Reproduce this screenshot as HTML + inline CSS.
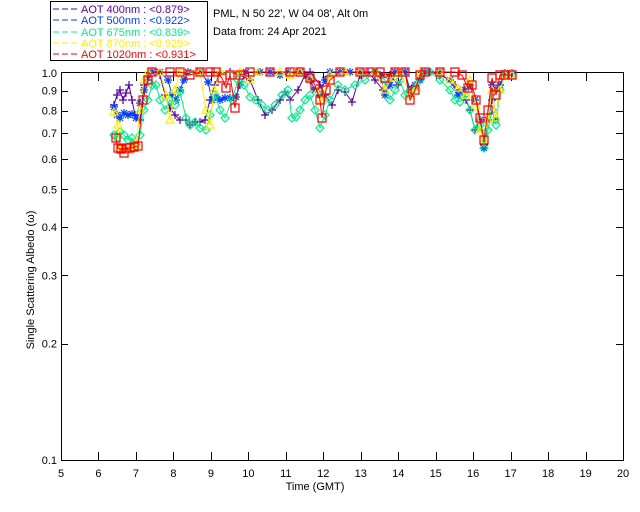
<!DOCTYPE html>
<html><head><meta charset="utf-8"><style>
html,body{margin:0;padding:0;background:#fff;width:640px;height:512px;overflow:hidden}
svg{display:block}
text{font-family:"Liberation Sans",sans-serif;font-size:11px}
</style></head><body>
<svg id="s" width="640" height="512" xmlns="http://www.w3.org/2000/svg">
<rect x="50.5" y="1.5" width="157" height="59" fill="none" stroke="#000"/>
<g font-size="11" xml:space="preserve">
<line x1="53" y1="9" x2="78" y2="9" stroke="#5a00a0" stroke-dasharray="6,3"/><text x="81" y="13" fill="#5a00a0">AOT  400nm : &lt;0.879&gt;</text>
<line x1="53" y1="20" x2="78" y2="20" stroke="#0040ff" stroke-dasharray="6,3"/><text x="81" y="24" fill="#0040ff">AOT  500nm : &lt;0.922&gt;</text>
<line x1="53" y1="32" x2="78" y2="32" stroke="#00ee88" stroke-dasharray="6,3"/><text x="81" y="36" fill="#00ee88">AOT  675nm : &lt;0.839&gt;</text>
<line x1="53" y1="43" x2="78" y2="43" stroke="#ffee00" stroke-dasharray="6,3"/><text x="81" y="47" fill="#ffee00">AOT  870nm : &lt;0.929&gt;</text>
<line x1="53" y1="54" x2="78" y2="54" stroke="#ff0000" stroke-dasharray="6,3"/><text x="81" y="58" fill="#ff0000">AOT 1020nm : &lt;0.931&gt;</text>
</g>
<text x="213" y="17">PML, N 50 22', W 04 08', Alt 0m</text>
<text x="213" y="35">Data from: 24 Apr 2021</text>
<rect x="61.5" y="72.5" width="562" height="388" fill="none" stroke="#000"/>
<g id="ax"></g>
<g id="data"></g>
<text x="315" y="490" text-anchor="middle">Time (GMT)</text>
<text transform="translate(34,280) rotate(-90)" text-anchor="middle">Single Scattering Albedo (ω)</text>
</svg>
<script>
var NS="http://www.w3.org/2000/svg",ax=document.getElementById('ax'),dg=document.getElementById('data');
function el(t,a,p){var e=document.createElementNS(NS,t);for(var k in a)e.setAttribute(k,a[k]);(p||ax).appendChild(e);return e;}
function X(t){return 61+(t-5)*37.47}
function Y(v){return 73-387*Math.log10(v)}
for(var h=5;h<=20;h++){var x=Math.round(X(h))+.5;
 if(h>5&&h<20){el('line',{x1:x,y1:460,x2:x,y2:452,stroke:'#000'});el('line',{x1:x,y1:73,x2:x,y2:81,stroke:'#000'});}
 var t=el('text',{x:X(h),y:477,'text-anchor':'middle'});t.textContent=h;}
var yl=[[1.0,'1.0'],[0.9,'0.9'],[0.8,'0.8'],[0.7,'0.7'],[0.6,'0.6'],[0.5,'0.5'],[0.4,'0.4'],[0.3,'0.3'],[0.2,'0.2'],[0.1,'0.1']];
yl.forEach(function(a){var y=Y(a[0]);var t=el('text',{x:57,y:y+4,'text-anchor':'end'});t.textContent=a[1];
 if(a[0]<1&&a[0]>0.1){el('line',{x1:61,y1:Math.round(y)+.5,x2:68,y2:Math.round(y)+.5,stroke:'#000'});el('line',{x1:616,y1:Math.round(y)+.5,x2:623,y2:Math.round(y)+.5,stroke:'#000'});}});
var S={
p:[[114,105],[117,95],[120,90],[123,100],[126,93],[129,85],[132,100],[135,115],[140,120],[144,85],[148,80],[152,72],[156,72],[160,75],[165,95],[170,108],[175,115],[180,120],[186,120],[190,125],[195,122],[200,122],[205,120],[210,100],[215,85],[220,72],[230,72],[240,75],[250,80],[258,100],[265,115],[272,110],[280,100],[285,92],[290,100],[298,90],[305,75],[310,72],[320,85],[325,95],[332,105],[338,90],[345,92],[352,102],[360,75],[368,72],[375,80],[383,90],[390,75],[398,85],[405,72],[410,92],[415,88],[420,75],[430,72],[440,75],[450,80],[455,85],[460,90],[466,100],[470,110],[475,130],[480,120],[484,145],[488,120],[492,100],[496,90],[500,85],[505,75],[512,73]],
b:[[114,107],[117,115],[120,118],[124,113],[128,115],[132,114],[136,118],[140,103],[144,90],[148,75],[152,72],[160,72],[168,80],[172,95],[176,100],[180,90],[184,80],[188,72],[200,72],[208,82],[212,100],[216,97],[220,100],[225,98],[230,98],[236,97],[240,85],[246,72],[260,72],[270,72],[280,75],[288,72],[300,72],[310,80],[315,90],[320,95],[325,80],[330,72],[340,72],[350,72],[360,72],[375,72],[380,75],[385,95],[390,85],[395,72],[405,72],[410,90],[415,85],[420,80],[425,72],[440,72],[450,80],[458,95],[465,90],[470,85],[475,100],[480,120],[484,148],[488,120],[492,85],[496,120],[500,85],[505,73],[512,73]],
g:[[114,135],[117,138],[120,132],[124,135],[128,140],[132,138],[136,145],[140,135],[144,110],[148,100],[152,85],[156,85],[160,100],[165,110],[170,100],[175,105],[180,92],[186,118],[190,125],[195,122],[200,128],[206,130],[210,115],[215,95],[220,110],[225,118],[232,100],[238,80],[244,85],[250,97],[256,100],[262,105],[268,110],[275,105],[282,95],[288,90],[292,118],[296,117],[300,110],[305,100],[310,95],[315,110],[320,128],[325,115],[330,100],[338,85],[345,90],[355,85],[365,80],[375,72],[385,80],[390,100],[395,90],[400,80],[405,95],[410,92],[415,88],[420,80],[430,72],[440,80],[450,90],[455,100],[460,102],[465,95],[470,110],[475,130],[480,125],[484,148],[488,130],[492,110],[496,125],[500,90],[505,75],[512,75]],
y:[[114,112],[118,125],[120,148],[124,150],[128,150],[132,148],[136,145],[140,110],[144,80],[148,72],[160,72],[166,95],[170,120],[175,90],[180,72],[200,72],[206,110],[210,125],[214,90],[220,72],[240,72],[250,80],[258,72],[280,72],[290,75],[300,72],[310,78],[318,90],[322,100],[330,75],[345,72],[360,72],[375,72],[385,90],[392,78],[400,72],[410,95],[416,88],[420,72],[440,72],[450,80],[458,88],[466,95],[470,80],[476,105],[480,130],[484,140],[488,120],[492,90],[496,118],[500,90],[505,75],[512,75]],
r:[[116,138],[118,148],[121,149],[124,153],[127,148],[130,148],[134,147],[138,146],[143,100],[148,80],[152,72],[170,72],[180,72],[190,75],[200,72],[210,72],[216,72],[222,78],[226,88],[230,75],[235,108],[240,75],[250,72],[270,72],[290,72],[300,72],[310,78],[315,85],[320,100],[322,118],[326,90],[330,80],[340,72],[360,72],[370,72],[380,72],[385,78],[395,72],[405,72],[410,100],[415,90],[420,75],[425,72],[440,72],[455,72],[462,75],[468,88],[472,85],[476,100],[480,118],[484,140],[488,110],[492,78],[496,95],[500,75],[505,75],[512,75]]};
var C={p:'#5a00a0',b:'#0040ff',g:'#00ee88',y:'#ffee00',r:'#ff0000'};
['p','b','g','y','r'].forEach(function(k){
 var pts=S[k],c=C[k];
 el('polyline',{points:pts.map(function(a){return a.join(',')}).join(' '),fill:'none',stroke:c,'stroke-width':1},dg);
 pts.forEach(function(a){var x=a[0],y=a[1],d;
  if(k=='p')d='M'+(x-4)+' '+y+'h8M'+x+' '+(y-4)+'v8';
  else if(k=='b')d='M'+(x-4)+' '+y+'h8M'+x+' '+(y-4)+'v8M'+(x-3)+' '+(y-3)+'l6 6M'+(x+3)+' '+(y-3)+'l-6 6';
  else if(k=='g')d='M'+x+' '+(y-4)+'l4 4l-4 4l-4 -4z';
  else if(k=='y')d='M'+x+' '+(y-4)+'l4 7h-8z';
  else d='M'+(x-4)+' '+(y-4)+'h8v8h-8z';
  el('path',{d:d,fill:'none',stroke:c,'stroke-width':1.2},dg);});
});
</script>
</body></html>
